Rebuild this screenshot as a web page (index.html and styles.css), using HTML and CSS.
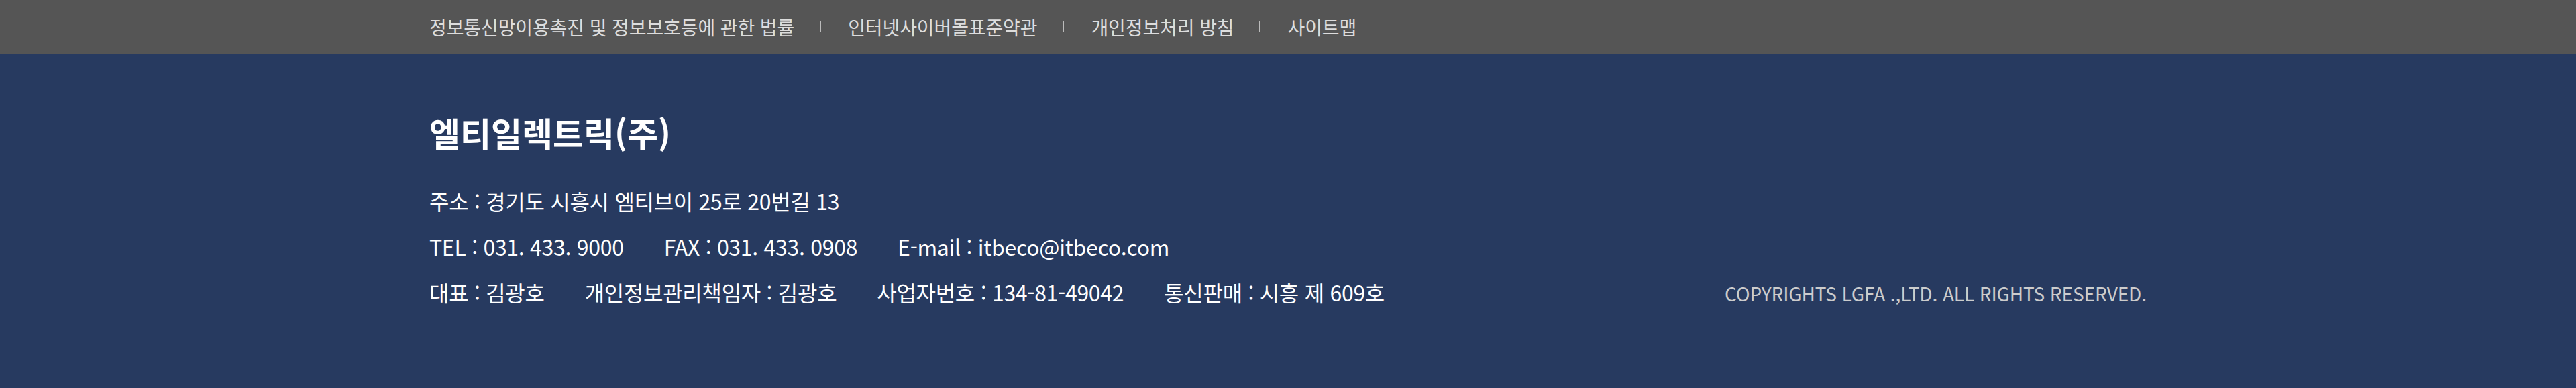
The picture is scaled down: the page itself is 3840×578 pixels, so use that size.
FILE: index.html
```html
<!DOCTYPE html>
<html lang="ko">
<head>
<meta charset="utf-8">
<title>엘티일렉트릭(주)</title>
<link rel="stylesheet" href="styles.css">
</head>
<body>
<div class="topbar">
  <div class="container topnav">
    <a class="nav-link" href="#">정보통신망이용촉진 및 정보보호등에 관한 법률</a>
    <span class="sep"></span>
    <a class="nav-link" href="#">인터넷사이버몰표준약관</a>
    <span class="sep"></span>
    <a class="nav-link" href="#">개인정보처리 방침</a>
    <span class="sep"></span>
    <a class="nav-link" href="#">사이트맵</a>
  </div>
</div>
<footer class="footer">
  <div class="container footer-inner">
    <div class="info">
      <h2 class="company">엘티일렉트릭(주)</h2>
      <p class="line"><span class="item">주소 : 경기도 시흥시 엠티브이 25로 20번길 13</span></p>
      <p class="line"><span class="item">TEL : 031. 433. 9000</span><span class="item">FAX : 031. 433. 0908</span><span class="item">E-mail : itbeco@itbeco.com</span></p>
      <p class="line"><span class="item">대표 : 김광호</span><span class="item">개인정보관리책임자 : 김광호</span><span class="item">사업자번호 : 134-81-49042</span><span class="item">통신판매 : 시흥 제 609호</span></p>
    </div>
    <p class="copyright">COPYRIGHTS LGFA .,LTD. ALL RIGHTS RESERVED.</p>
  </div>
</footer>
</body>
</html>
```
FILE: styles.css
```css
html, body {
  margin: 0;
  padding: 0;
  background: #273a60;
  font-family: "Noto Sans CJK KR", "Noto Sans", sans-serif;
}

.container {
  width: 2560px;
  margin: 0 auto;
}

.topbar {
  background: #555555;
  height: 80px;
}

.topnav {
  height: 80px;
  display: flex;
  align-items: center;
}

.nav-link {
  color: #dddddd;
  font-size: 28px;
  letter-spacing: -0.1px;
  text-decoration: none;
}

.sep {
  width: 2px;
  height: 16px;
  background: #bbbbbb;
  margin: 0 40px 0 38px;
}

.footer {
  background: #273a60;
  padding: 86px 0 109px;
}

.footer-inner {
  display: flex;
  justify-content: space-between;
  align-items: flex-end;
}

.company {
  margin: 0 0 37px;
  font-size: 50px;
  line-height: 62px;
  font-weight: 700;
  color: #ffffff;
}

.line {
  margin: 0;
  font-size: 32px;
  line-height: 68px;
  color: #ffffff;
  letter-spacing: -0.3px;
}

.item {
  margin-right: 60px;
}

.item:last-child {
  margin-right: 0;
}

.copyright {
  margin: 0 0 -2px;
  font-size: 28px;
  line-height: 68px;
  color: #cccccc;
  letter-spacing: -0.1px;
}
```
